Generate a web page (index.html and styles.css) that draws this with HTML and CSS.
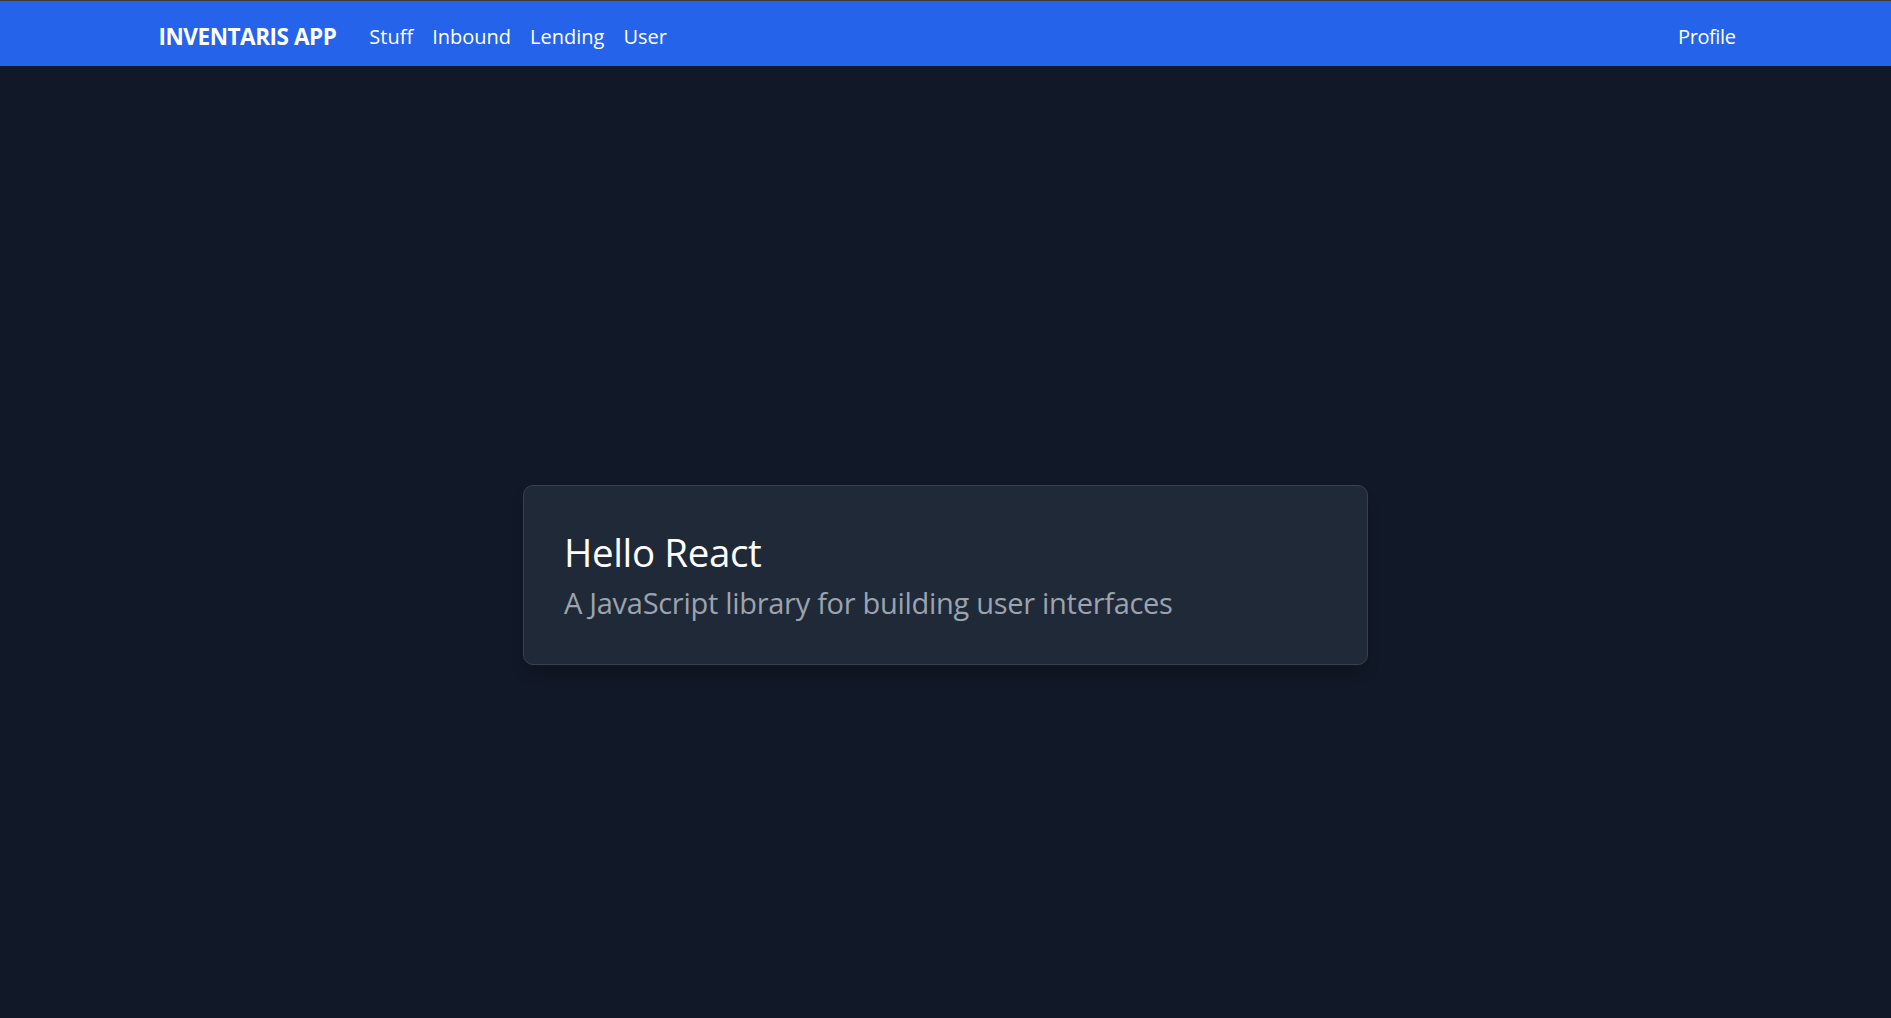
FILE: index.html
```html
<!DOCTYPE html>
<html lang="en">
<head>
<meta charset="utf-8">
<title>Inventaris App</title>
<link rel="stylesheet" href="styles.css">
</head>
<body>
<nav class="navbar">
  <div class="nav-inner">
    <div class="nav-left">
      <a class="brand" href="#">INVENTARIS APP</a>
      <div class="nav-links">
        <a class="nav-link" href="#">Stuff</a>
        <a class="nav-link" href="#">Inbound</a>
        <a class="nav-link" href="#">Lending</a>
        <a class="nav-link" href="#">User</a>
      </div>
    </div>
    <a class="nav-link nav-profile" href="#">Profile</a>
  </div>
</nav>
<main class="main">
  <section class="card">
    <h1 class="card-title">Hello React</h1>
    <p class="card-text">A JavaScript library for building user interfaces</p>
  </section>
</main>
</body>
</html>
```
FILE: styles.css
```css
* { box-sizing: border-box; }
html, body { margin: 0; padding: 0; }
body {
  background: #111827;
  font-family: "Open Sans", "Noto Sans", sans-serif;
  color: #ffffff;
  border-top: 1px solid #3a3a3a;
}
a { color: inherit; text-decoration: none; }
.navbar {
  background: #2563eb;
  height: 65px;
}
.nav-inner {
  max-width: 1580px;
  margin: 0 auto;
  height: 100%;
  padding: 6px 0 0 3px;
  display: flex;
  align-items: center;
  justify-content: space-between;
}
.nav-left {
  display: flex;
  align-items: center;
  gap: 33px;
}
.brand {
  font-weight: 700;
  font-size: 22.5px;
  letter-spacing: -0.02em;
}
.nav-links {
  display: flex;
  gap: 19px;
}
.nav-link {
  font-size: 20px;
}
.nav-profile {
  letter-spacing: -0.02em;
}
.main {
  height: 1018px;
  display: flex;
  align-items: center;
  justify-content: center;
}
.card {
  width: 845px;
  background: #1f2937;
  border: 1px solid #374151;
  border-radius: 10px;
  padding: 44px 40px 41px;
  box-shadow: 0 10px 15px -3px rgba(0,0,0,0.2);
}
.card-title {
  margin: 0;
  font-weight: 400;
  font-size: 38.5px;
  line-height: 45px;
  letter-spacing: -0.01em;
}
.card-text {
  margin: 8px 0 0;
  font-size: 29px;
  line-height: 40px;
  color: #9ca3af;
  letter-spacing: -0.01em;
}
```
